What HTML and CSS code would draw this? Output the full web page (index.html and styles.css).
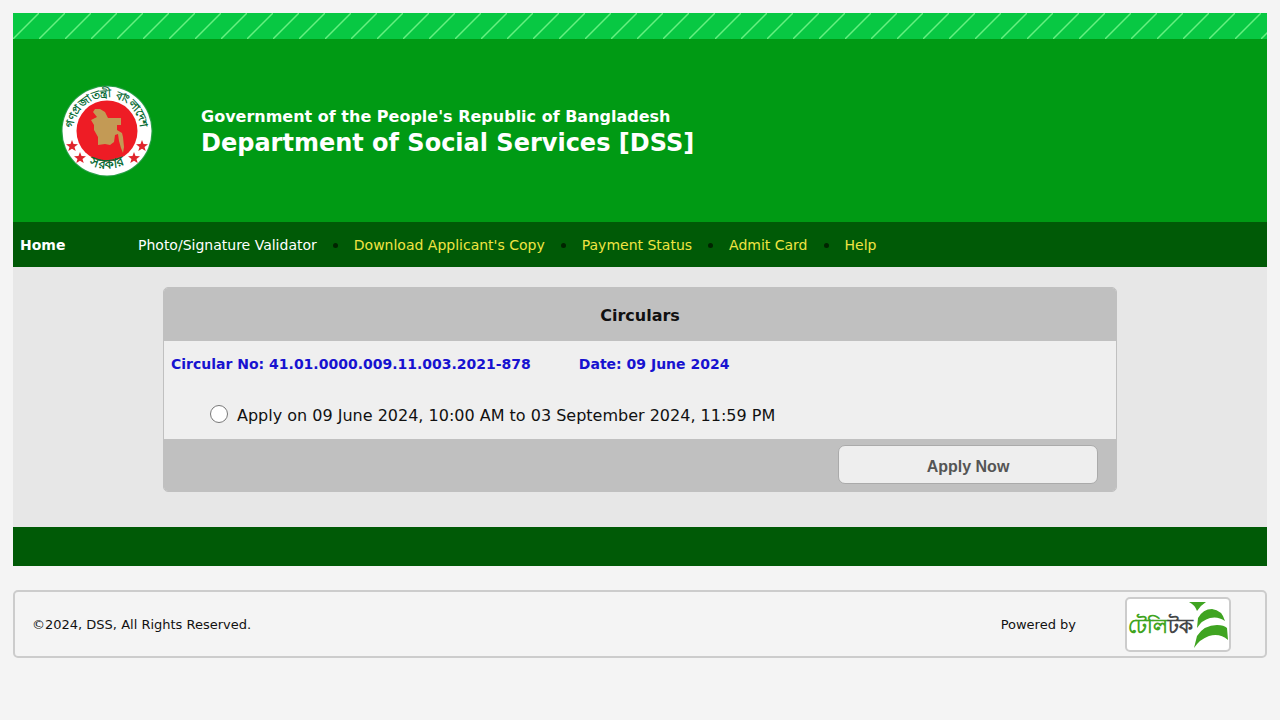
FILE: index.html
```html
<!DOCTYPE html>
<html lang="en">
<head>
  <meta charset="UTF-8">
  <meta name="viewport" content="width=device-width, initial-scale=1.0">
  <title>Department of Social Services [DSS]</title>
  <link rel="stylesheet" href="styles.css">
</head>
<body>
  <div class="page">
    <div class="stripes"></div>

    <header class="header">
      <svg class="emblem" viewBox="0 0 92 92" role="img" aria-label="Government seal">
        <defs>
          <path id="arc-top" d="M13.500 54 A33.500 33.500 0 1 1 78.500 54"/>
          <path id="arc-bottom" d="M22 76 A41 41 0 0 0 70 76"/>
        </defs>
        <circle cx="46" cy="46" r="45.500" fill="#2aa04a"/>
        <circle cx="46" cy="46" r="44.500" fill="#fff"/>
        <circle cx="46" cy="46" r="30.500" fill="#ee1c25"/>
        <path fill="#c39a55" d="M34 24 L39 24 44 27 47 33 60 33 60 40 56 40 56 45 61 48 62 52 63 62 62 68 60 63 58 56 57 49 54 50 53 57 49 60 44 59 37 60 37 52 33 45 33 40 30 35 36 32 32 27 Z"/>
        <g fill="#e0242c">
          <path id="star" d="M11 55 L12.500 59 17 59.200 13.500 62 14.700 66 11 63.700 7.300 66 8.500 62 5 59.200 9.500 59 Z"/>
          <use href="#star" x="8" y="12"/>
          <use href="#star" x="70" y="0"/>
          <use href="#star" x="62" y="12"/>
        </g>
        <text class="seal-text"><textPath href="#arc-top" startOffset="50%">গণপ্রজাতন্ত্রী বাংলাদেশ</textPath></text>
        <text class="seal-text seal-bottom"><textPath href="#arc-bottom" startOffset="50%">সরকার</textPath></text>
      </svg>
      <div class="titles">
        <p class="government">Government of the People's Republic of Bangladesh</p>
        <h1>Department of Social Services [DSS]</h1>
      </div>
    </header>

    <nav class="menu">
      <a class="home" href="#">Home</a>
      <ul>
        <li><a class="validator" href="#">Photo/Signature Validator</a></li>
        <li><a href="#">Download Applicant's Copy</a></li>
        <li><a href="#">Payment Status</a></li>
        <li><a href="#">Admit Card</a></li>
        <li><a href="#">Help</a></li>
      </ul>
    </nav>

    <main class="content">
      <form class="circulars">
        <h2>Circulars</h2>
        <div class="circular">
          <p class="circular-info"><span>Circular No: 41.01.0000.009.11.003.2021-878</span><span>Date: 09 June 2024</span></p>
          <div class="option">
            <input type="radio" id="circular-878" name="circular">
            <label for="circular-878">Apply on 09 June 2024, 10:00 AM to 03 September 2024, 11:59 PM</label>
          </div>
        </div>
        <div class="actions">
          <button type="button">Apply Now</button>
        </div>
      </form>
    </main>

    <div class="bottom-bar"></div>
  </div>

  <footer class="footer">
    <span>©2024, DSS, All Rights Reserved.</span>
    <div class="powered">
      <span>Powered by</span>
      <a class="logo" href="#" aria-label="Teletalk">
        <svg viewBox="0 0 102 51">
          <text class="logo-text" x="1" y="34"><tspan fill="#3fa421">টেলি</tspan><tspan fill="#454748">টক</tspan></text>
          <g fill="#3fa421">
            <path d="M62 3 H79 Q74 6 70 12 Q68 6 62 3 Z"/>
            <path d="M70 29 L71 19 Q76 10 85 10 Q95 11 98 22 Q91 17 83 19 Q75 21 70 29 Z"/>
            <path d="M67 49 L70 37 Q77 26 90 26 Q97 26 100 29 L101 41 Q93 34 82 37 Q73 40 67 49 Z"/>
          </g>
        </svg>
      </a>
    </div>
  </footer>
</body>
</html>
```
FILE: styles.css
```css
* {
  box-sizing: border-box;
}
body {
  margin: 13px;
  background-color: #f4f4f4;
  color: #111;
  font-family: Verdana, "DejaVu Sans", sans-serif;
}
h1, h2, p, ul {
  margin: 0;
  padding: 0;
}
a {
  text-decoration: none;
}
.page {
  background-color: #e7e7e7;
}
.stripes {
  height: 26px;
  background: linear-gradient(to bottom right, #08c843 47%, #66f080 49%, #66f080 51%, #08c843 53%) 0 0 / 26px 26px;
}
.header {
  display: flex;
  align-items: center;
  gap: 48px;
  height: 183px;
  padding: 0 48px;
  background-color: #009a14;
  color: white;
}
.emblem {
  width: 92px;
  height: 92px;
}
.seal-text {
  fill: #086b35;
  font-size: 11px;
  font-weight: bold;
  text-anchor: middle;
}
.seal-bottom {
  font-size: 13px;
}
.government {
  font-size: 16px;
  font-weight: bold;
  line-height: 24px;
}
h1 {
  font-size: 24px;
  line-height: 28px;
}
/* Main menu */
.menu {
  display: flex;
  align-items: center;
  height: 45px;
  padding: 0 7px;
  background-color: #005a06;
  font-size: 14px;
}
.menu a {
  color: #f0e442;
}
.menu .home {
  width: 118px;
  color: white;
  font-weight: bold;
}
.menu .validator {
  color: white;
}
.menu ul {
  display: flex;
  list-style: none;
}
.menu li + li::before {
  content: "";
  display: inline-block;
  width: 5px;
  height: 5px;
  margin: 0 16px;
  border-radius: 50%;
  background-color: #002400;
  vertical-align: 2px;
}
/* Circular list */
.content {
  padding: 20px 150px 35px;
}
.circulars {
  border: 1px solid #c0c0c0;
  border-radius: 5px;
  background-color: #efefef;
  overflow: hidden;
}
.circulars h2 {
  padding-top: 3px;
  background-color: #c0c0c0;
  font-size: 16px;
  line-height: 50px;
  text-align: center;
}
.circular {
  padding: 11px 7px 9px;
}
.circular-info {
  display: flex;
  gap: 48px;
  color: #1712d0;
  font-size: 14px;
  font-weight: bold;
  line-height: 24px;
}
.option {
  display: flex;
  align-items: flex-start;
  gap: 9px;
  padding: 26px 0 0 39px;
  font-size: 16px;
  line-height: 28px;
}
.option input {
  width: 18px;
  height: 18px;
  margin: 3px 0 0;
}
.actions {
  display: flex;
  justify-content: flex-end;
  padding: 6px 18px 7px;
  background-color: #c0c0c0;
}
.actions button {
  width: 260px;
  height: 39px;
  padding: 4px 0 0;
  border: 1px solid #aaa;
  border-radius: 7px;
  background-color: #eee;
  color: #555;
  font: bold 16px Arial, "Liberation Sans", sans-serif;
}
.bottom-bar {
  height: 39px;
  background-color: #005a06;
}
.footer {
  display: flex;
  justify-content: space-between;
  align-items: center;
  height: 68px;
  margin-top: 24px;
  padding: 0 34px 0 17px;
  border: 2px solid #ccc;
  border-radius: 5px;
  font-size: 13px;
}
.powered {
  display: flex;
  align-items: center;
  gap: 49px;
}
.logo {
  display: flex;
  width: 106px;
  height: 55px;
  border: 2px solid #ccc;
  border-radius: 5px;
  background-color: white;
}
.logo svg {
  width: 100%;
}
.logo-text {
  font-size: 20px;
  font-weight: bold;
}
```
